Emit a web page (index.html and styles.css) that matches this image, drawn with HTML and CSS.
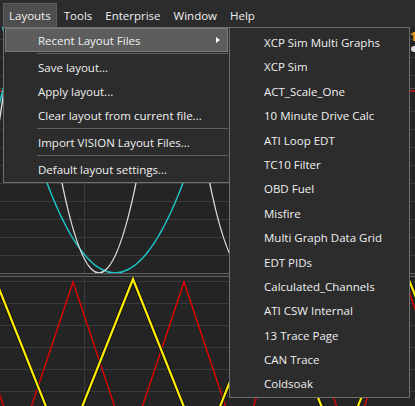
FILE: index.html
```html
<!DOCTYPE html>
<html lang="en">
<head>
  <meta charset="UTF-8">
  <title>Layouts menu</title>
  <link rel="stylesheet" href="styles.css">
</head>
<body>
  <div class="app">
    <!-- Menu bar -->
    <nav class="menubar">
      <span class="menubar-item active">Layouts</span>
      <span class="menubar-item">Tools</span>
      <span class="menubar-item">Enterprise</span>
      <span class="menubar-item">Window</span>
      <span class="menubar-item">Help</span>
    </nav>

    <!-- Chart panels behind the menus -->
    <div class="workspace">
      <div class="chart chart-top">
        <svg width="415" height="246" viewBox="0 27 415 246">
          <path class="grid" d="M0 39.5H415M0 57.5H415M0 75.5H415M0 111.5H415M0 129.5H415M0 147.5H415M0 165.5H415M0 183.5H415M0 201.5H415M0 219.5H415M0 237.5H415M0 255.5H415M84.5 27V273"/>
          <path class="limit" d="M0 88.5H415"/>
          <path class="limit-red" d="M0 91H415"/>
          <path class="trace trace-cyan" d="M-214 -7.2Q-94 553.2 26 -7.2M-25 -108.4Q115 654.4 255 -108.4"/>
          <path class="trace trace-white" d="M-128.7 -147.5Q-48.7 693.5 31.3 -147.5M19 -147.5Q99 693.5 179 -147.5M166.7 -147.5Q246.7 693.5 326.7 -147.5"/>
          <text class="axis-label" x="410" y="41">1</text>
          <circle class="marker" cx="414" cy="49" r="3"/>
        </svg>
      </div>
      <div class="chart-divider"></div>
      <div class="chart chart-bottom">
        <svg width="415" height="129" viewBox="0 277 415 129">
          <path class="grid" d="M0 281.5H415M0 303.5H415M0 325.5H415M0 347.5H415M0 369.5H415M0 391.5H415M84.5 277V406"/>
          <polyline class="wave-red" points="-93.5,448 -38,282 17.5,448 73,282 128.5,448 184,282 239.5,448 295,282 350.5,448 406,282 461.5,448"/>
          <polyline class="wave-shadow" points="-73.7,452 -4.8,279 64.1,452 133,279 201.9,452 270.8,279 339.7,452 408.6,279 477.5,452"/>
          <polyline class="wave-yellow" points="-73.7,452 -4.8,279 64.1,452 133,279 201.9,452 270.8,279 339.7,452 408.6,279 477.5,452"/>
        </svg>
      </div>
    </div>

    <!-- Layouts dropdown -->
    <ul class="menu layouts-menu">
      <li class="menu-item highlighted">Recent Layout Files<span class="submenu-arrow"></span></li>
      <li class="menu-separator"></li>
      <li class="menu-item">Save layout...</li>
      <li class="menu-item">Apply layout...</li>
      <li class="menu-item">Clear layout from current file...</li>
      <li class="menu-separator"></li>
      <li class="menu-item">Import VISION Layout Files...</li>
      <li class="menu-separator"></li>
      <li class="menu-item">Default layout settings...</li>
    </ul>

    <!-- Recent Layout Files submenu -->
    <ul class="menu recent-menu">
      <li class="menu-item">XCP Sim Multi Graphs</li>
      <li class="menu-item">XCP Sim</li>
      <li class="menu-item">ACT_Scale_One</li>
      <li class="menu-item">10 Minute Drive Calc</li>
      <li class="menu-item">ATI Loop EDT</li>
      <li class="menu-item">TC10 Filter</li>
      <li class="menu-item">OBD Fuel</li>
      <li class="menu-item">Misfire</li>
      <li class="menu-item">Multi Graph Data Grid</li>
      <li class="menu-item">EDT PIDs</li>
      <li class="menu-item">Calculated_Channels</li>
      <li class="menu-item">ATI CSW Internal</li>
      <li class="menu-item">13 Trace Page</li>
      <li class="menu-item">CAN Trace</li>
      <li class="menu-item">Coldsoak</li>
    </ul>
  </div>
</body>
</html>
```

FILE: styles.css
```css
body {
  margin: 0;
  background-color: #242424;
  font-family: "Open Sans", "Noto Sans", sans-serif;
  font-size: 11.5px;
  color: #f0f0f0;
}

.app {
  position: relative;
  width: 415px;
  height: 406px;
  overflow: hidden;
  display: flex;
  flex-direction: column;
}

/* menu bar */
.menubar {
  display: flex;
  gap: 1px;
  height: 27px;
  padding: 3px 0 0 3px;
  box-sizing: border-box;
  background-color: #2c2c2c;
}

.menubar-item {
  height: 24px;
  padding: 1px 5px 0;
  line-height: 22px;
  box-sizing: border-box;
  border: 1px solid transparent;
  border-bottom: none;
  white-space: nowrap;
}

.menubar-item.active {
  background-color: #4e4e4e;
  border-color: #5c5c5c;
}

/* charts */
.workspace {
  flex: 1;
  display: flex;
  flex-direction: column;
}

.chart {
  background-color: #242424;
}

.chart svg {
  display: block;
}

.chart-top {
  height: 246px;
}

.chart-divider {
  height: 2px;
  border-top: 1px solid #606060;
  border-bottom: 1px solid #606060;
  background-color: #2a2a2a;
}

.chart-bottom {
  flex: 1;
}

.grid {
  stroke: #3a3a3a;
  stroke-width: 1;
  fill: none;
  shape-rendering: crispEdges;
}

.limit {
  stroke: #505050;
  stroke-width: 1;
  fill: none;
}

.limit-red {
  stroke: #d41a1a;
  stroke-width: 1.5;
  fill: none;
}

.trace {
  fill: none;
  stroke-width: 1.6;
}

.trace-cyan {
  stroke: #1ec8cc;
}

.trace-white {
  stroke: #dcdcdc;
}

.axis-label {
  font-family: "Open Sans", sans-serif;
  font-size: 12px;
  font-weight: bold;
  fill: #f29a1e;
}

.marker {
  fill: #d8d8d8;
}

.wave-red {
  fill: none;
  stroke: #e00000;
  stroke-width: 1.4;
}

.wave-shadow {
  fill: none;
  stroke: #111;
  stroke-width: 4;
}

.wave-yellow {
  fill: none;
  stroke: #ffee00;
  stroke-width: 2.2;
}

/* dropdown menus */
.menu {
  position: absolute;
  margin: 0;
  padding: 0 1px 1px;
  list-style: none;
  background-color: #2c2c2c;
  border: 1px solid #6f6f6f;
  box-sizing: border-box;
}

.layouts-menu {
  left: 3px;
  top: 27px;
  width: 227px;
  height: 156px;
}

.recent-menu {
  left: 229px;
  top: 27px;
  width: 181px;
  height: 371px;
  padding-top: 2px;
}

.menu-item {
  position: relative;
  height: 24px;
  padding: 1px 0 0 32px;
  line-height: 22px;
  box-sizing: border-box;
  border: 1px solid transparent;
  white-space: nowrap;
}

.recent-menu .menu-item {
  height: 24.4px;
}

.menu-item.highlighted {
  background-color: #5d5d5d;
  border-color: #7a7a7a;
}

.menu-separator {
  height: 1px;
  margin: 1px 0 1px 32px;
  background-color: #606060;
}

.submenu-arrow {
  position: absolute;
  right: 7px;
  top: 8px;
  width: 0;
  height: 0;
  border-left: 4px solid #fff;
  border-top: 3.5px solid transparent;
  border-bottom: 3.5px solid transparent;
}
```
